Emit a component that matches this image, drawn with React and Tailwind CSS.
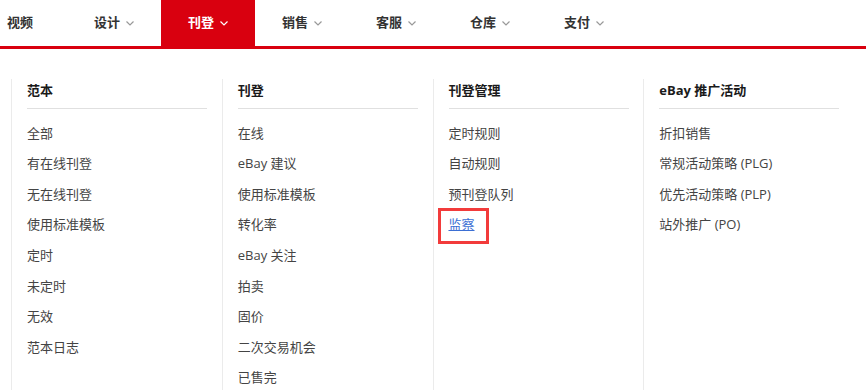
import React from 'react';

const tabs = [
  { label: '视频', caret: false },
  { label: '设计', caret: true },
  { label: '刊登', caret: true, active: true },
  { label: '销售', caret: true },
  { label: '客服', caret: true },
  { label: '仓库', caret: true },
  { label: '支付', caret: true },
];

const columns = [
  {
    title: '范本',
    items: ['全部', '有在线刊登', '无在线刊登', '使用标准模板', '定时', '未定时', '无效', '范本日志'],
  },
  {
    title: '刊登',
    items: ['在线', 'eBay 建议', '使用标准模板', '转化率', 'eBay 关注', '拍卖', '固价', '二次交易机会', '已售完'],
  },
  {
    title: '刊登管理',
    items: ['定时规则', '自动规则', '预刊登队列', '监察'],
  },
  {
    title: 'eBay 推广活动',
    items: ['折扣销售', '常规活动策略 (PLG)', '优先活动策略 (PLP)', '站外推广 (PO)'],
  },
];

const Caret = ({ className }) => (
  <svg width="8" height="5" viewBox="0 0 8 5" className={className} fill="none">
    <polyline points="0.5,0.5 4,4 7.5,0.5" stroke="currentColor" strokeWidth="1.2" />
  </svg>
);

export default function App() {
  return (
    <div
      className="h-[390px] w-[866px] overflow-hidden bg-white text-[13px]"
      style={{ fontFamily: '"Open Sans", "Noto Sans CJK SC", sans-serif' }}
    >
      {/* Top nav */}
      <nav className="flex h-[46px] -ml-[27px]">
        {tabs.map(({ label, caret, active }) => (
          <div
            key={label}
            className={`flex w-[94px] shrink-0 items-center justify-center gap-[6px] font-bold ${
              active ? 'bg-[#d9000f] text-white' : 'text-[#333]'
            }`}
          >
            <span>{label}</span>
            {caret && <Caret className={active ? 'text-white' : 'text-[#999]'} />}
          </div>
        ))}
      </nav>
      <div className="h-[3px] bg-[#d9000f]" />

      {/* Dropdown */}
      <div className="flex h-[341px] pl-[11px] pt-[30px]">
        <div className="grid w-[843px] grid-cols-4">
          {columns.map((col) => (
            <div key={col.title} className="border-l border-[#ebebeb] pl-[15px] pr-4">
              <div className="w-[180px] border-b border-[#e0e0e0] pb-[7px]">
                <h3 className="h-[22px] leading-[22px] font-bold text-[#1a1a1a]">{col.title}</h3>
              </div>
              <ul className="mt-[9px]">
                {col.items.map((item) => (
                  <li key={item} className="relative flex h-[30.6px] items-center text-[#444]">
                    {item === '监察' ? (
                      <>
                        <a className="text-[#3b6fd4] underline">{item}</a>
                        {/* highlight box */}
                        <span className="absolute -left-[11px] -top-[2px] h-[36px] w-[51px] border-[3px] border-[#f23b3b]" />
                      </>
                    ) : (
                      item
                    )}
                  </li>
                ))}
              </ul>
            </div>
          ))}
        </div>
      </div>
    </div>
  );
}
